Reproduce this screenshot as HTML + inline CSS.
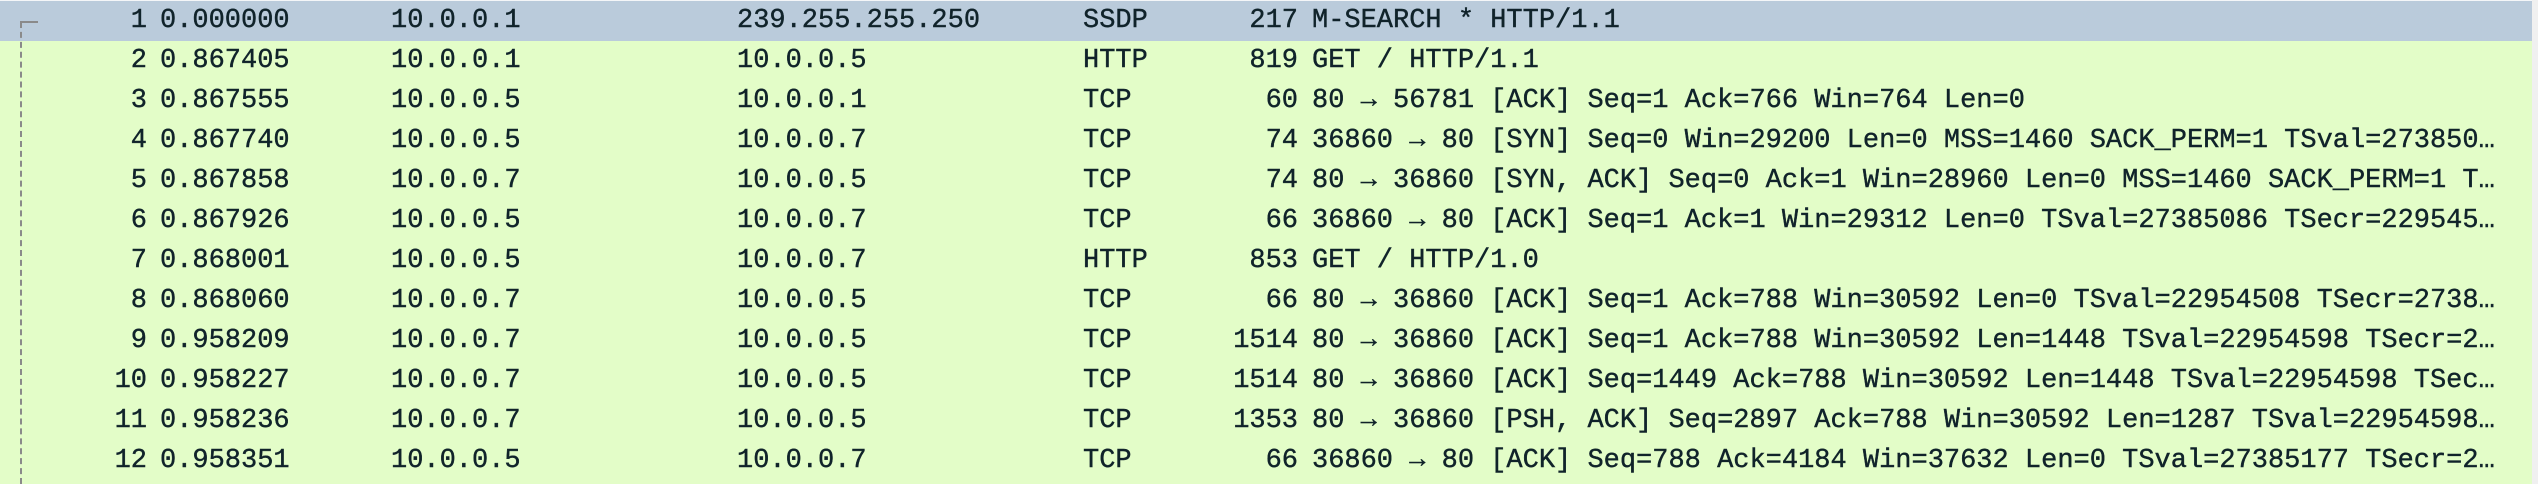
<!DOCTYPE html>
<html><head><meta charset="utf-8"><style>
html,body{margin:0;padding:0;width:2538px;height:484px;overflow:hidden;background:#e3fdc8;}
body{position:relative;font-family:"Liberation Mono","DejaVu Sans Mono",monospace;font-size:27px;color:#10232a;-webkit-text-stroke:0.4px #10232a;}
.r{position:absolute;left:0;width:2532px;height:40px;line-height:40px;background:#e3fdc8;white-space:pre;overflow:hidden;}
.r.sel{background:#bacbdb;}
.r span{position:absolute;top:0;}
.n{right:2385px;text-align:right;}
.t{left:160px}.s{left:391px}.d{left:737px}.p{left:1083px}
.l{right:1234px;text-align:right}.i{left:1312px}
#sb{position:absolute;left:2532px;top:0;width:6px;height:484px;background:#f0f0f0;}
#top{position:absolute;left:0;top:0;width:2532px;height:1px;background:#f4f6f8;}
#vl{position:absolute;left:20px;top:22px;width:0;height:462px;border-left:2px dashed #8a8a8a;}
#hl{position:absolute;left:20px;top:21px;width:18px;height:2px;background:#8a8a8a;}
</style></head><body>
<div id="top"></div>
<div class="r sel" style="top:1px"><span class="n">1</span><span class="t">0.000000</span><span class="s">10.0.0.1</span><span class="d">239.255.255.250</span><span class="p">SSDP</span><span class="l">217</span><span class="i">M-SEARCH * HTTP/1.1</span></div>
<div class="r" style="top:41px"><span class="n">2</span><span class="t">0.867405</span><span class="s">10.0.0.1</span><span class="d">10.0.0.5</span><span class="p">HTTP</span><span class="l">819</span><span class="i">GET / HTTP/1.1</span></div>
<div class="r" style="top:81px"><span class="n">3</span><span class="t">0.867555</span><span class="s">10.0.0.5</span><span class="d">10.0.0.1</span><span class="p">TCP</span><span class="l">60</span><span class="i">80 → 56781 [ACK] Seq=1 Ack=766 Win=764 Len=0</span></div>
<div class="r" style="top:121px"><span class="n">4</span><span class="t">0.867740</span><span class="s">10.0.0.5</span><span class="d">10.0.0.7</span><span class="p">TCP</span><span class="l">74</span><span class="i">36860 → 80 [SYN] Seq=0 Win=29200 Len=0 MSS=1460 SACK_PERM=1 TSval=273850…</span></div>
<div class="r" style="top:161px"><span class="n">5</span><span class="t">0.867858</span><span class="s">10.0.0.7</span><span class="d">10.0.0.5</span><span class="p">TCP</span><span class="l">74</span><span class="i">80 → 36860 [SYN, ACK] Seq=0 Ack=1 Win=28960 Len=0 MSS=1460 SACK_PERM=1 T…</span></div>
<div class="r" style="top:201px"><span class="n">6</span><span class="t">0.867926</span><span class="s">10.0.0.5</span><span class="d">10.0.0.7</span><span class="p">TCP</span><span class="l">66</span><span class="i">36860 → 80 [ACK] Seq=1 Ack=1 Win=29312 Len=0 TSval=27385086 TSecr=229545…</span></div>
<div class="r" style="top:241px"><span class="n">7</span><span class="t">0.868001</span><span class="s">10.0.0.5</span><span class="d">10.0.0.7</span><span class="p">HTTP</span><span class="l">853</span><span class="i">GET / HTTP/1.0</span></div>
<div class="r" style="top:281px"><span class="n">8</span><span class="t">0.868060</span><span class="s">10.0.0.7</span><span class="d">10.0.0.5</span><span class="p">TCP</span><span class="l">66</span><span class="i">80 → 36860 [ACK] Seq=1 Ack=788 Win=30592 Len=0 TSval=22954508 TSecr=2738…</span></div>
<div class="r" style="top:321px"><span class="n">9</span><span class="t">0.958209</span><span class="s">10.0.0.7</span><span class="d">10.0.0.5</span><span class="p">TCP</span><span class="l">1514</span><span class="i">80 → 36860 [ACK] Seq=1 Ack=788 Win=30592 Len=1448 TSval=22954598 TSecr=2…</span></div>
<div class="r" style="top:361px"><span class="n">10</span><span class="t">0.958227</span><span class="s">10.0.0.7</span><span class="d">10.0.0.5</span><span class="p">TCP</span><span class="l">1514</span><span class="i">80 → 36860 [ACK] Seq=1449 Ack=788 Win=30592 Len=1448 TSval=22954598 TSec…</span></div>
<div class="r" style="top:401px"><span class="n">11</span><span class="t">0.958236</span><span class="s">10.0.0.7</span><span class="d">10.0.0.5</span><span class="p">TCP</span><span class="l">1353</span><span class="i">80 → 36860 [PSH, ACK] Seq=2897 Ack=788 Win=30592 Len=1287 TSval=22954598…</span></div>
<div class="r" style="top:441px"><span class="n">12</span><span class="t">0.958351</span><span class="s">10.0.0.5</span><span class="d">10.0.0.7</span><span class="p">TCP</span><span class="l">66</span><span class="i">36860 → 80 [ACK] Seq=788 Ack=4184 Win=37632 Len=0 TSval=27385177 TSecr=2…</span></div>
<div id="vl"></div><div id="hl"></div>
<div id="sb"></div>
</body></html>
